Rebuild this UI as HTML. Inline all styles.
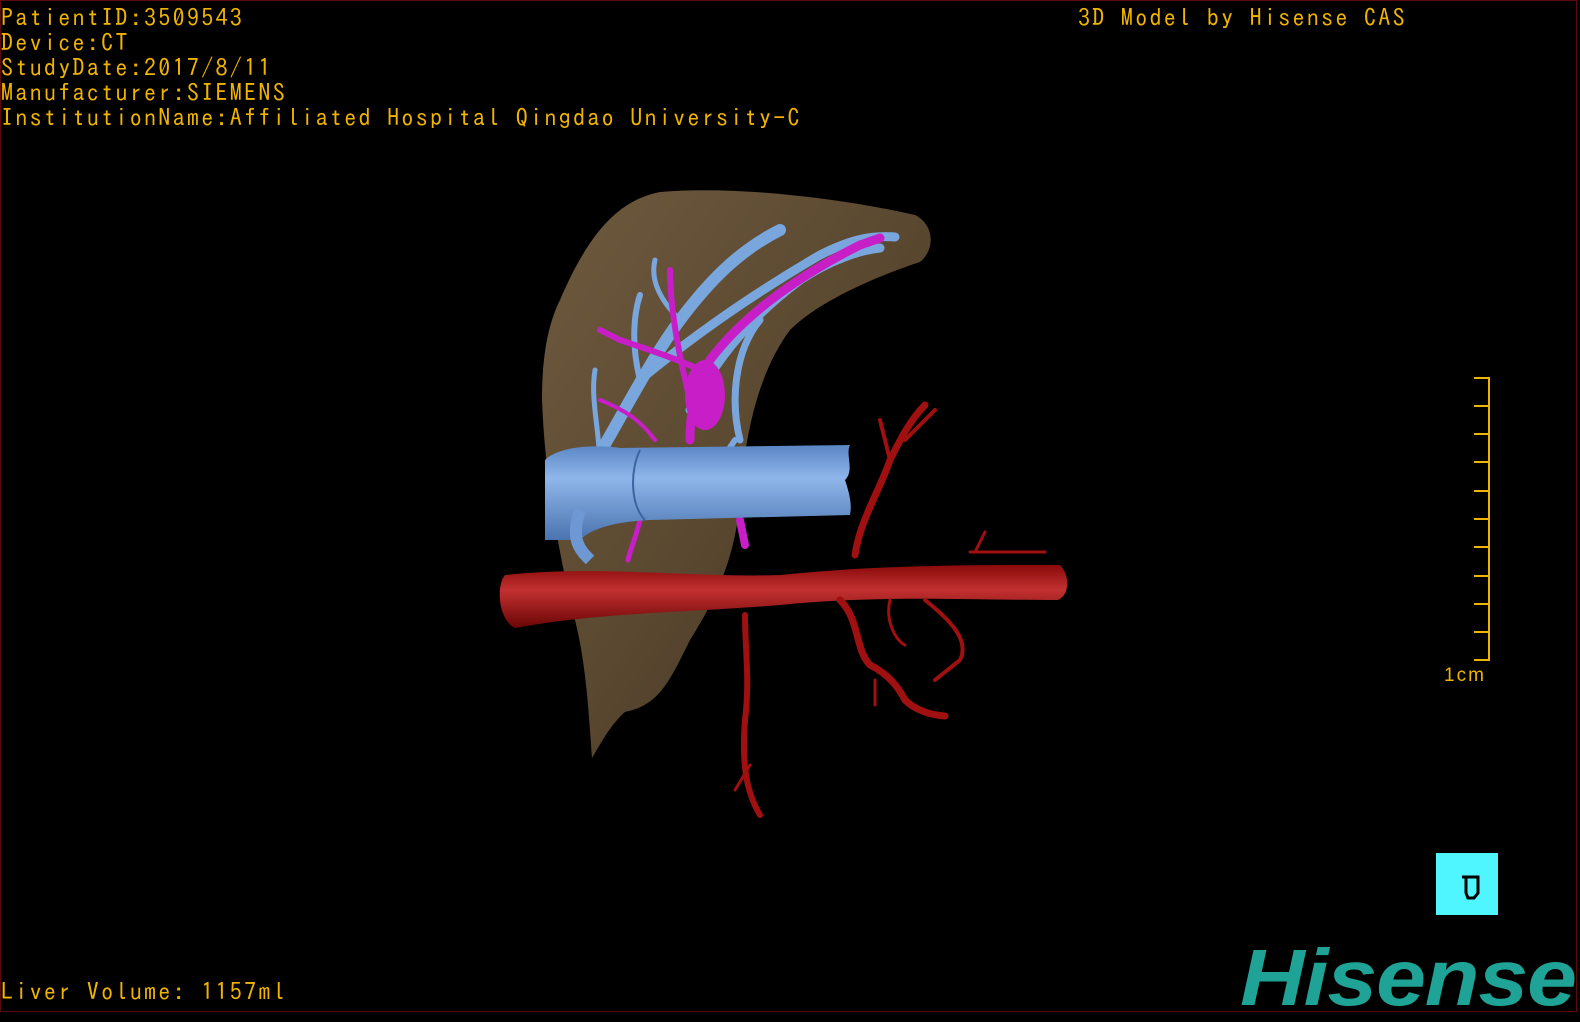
<!DOCTYPE html>
<html><head><meta charset="utf-8"><style>
html,body{margin:0;padding:0;background:#000;}
body{width:1580px;height:1020px;position:relative;overflow:hidden;}
.frame{position:absolute;left:0;top:0;width:1575px;height:1010px;border:1px solid #5a0a0a;box-sizing:content-box;}
.t{position:absolute;color:#f0b400;font-family:"IPAGothic","Liberation Mono",monospace;font-size:24px;letter-spacing:2.3px;line-height:25px;white-space:pre;}
.logo{position:absolute;left:1240px;top:938px;color:#1fa396;font-family:"Liberation Sans",sans-serif;font-weight:bold;font-style:italic;font-size:80px;letter-spacing:-1px;line-height:80px;transform:scaleX(1.12);transform-origin:left top;}
</style></head><body>
<div class="frame"></div>
<div class="t" style="left:1px;top:5px">PatientID:3509543
Device:CT
StudyDate:2017/8/11
Manufacturer:SIEMENS
InstitutionName:Affiliated Hospital Qingdao University-C</div>
<div class="t" style="left:1078px;top:5px">3D Model by Hisense CAS</div>
<div class="t" style="left:1px;top:979px">Liver Volume: 1157ml</div>
<svg width="1580" height="1020" style="position:absolute;left:0;top:0">
<defs>
<linearGradient id="lv" x1="0" y1="0" x2="1" y2="1"><stop offset="0" stop-color="#6e5a3e"/><stop offset="0.5" stop-color="#5a4830"/><stop offset="1" stop-color="#3e3020"/></linearGradient>
<linearGradient id="bl" x1="0" y1="0" x2="0" y2="1"><stop offset="0" stop-color="#5a86c4"/><stop offset="0.35" stop-color="#8fb6ea"/><stop offset="1" stop-color="#4a74b0"/></linearGradient>
<linearGradient id="rd" x1="0" y1="0" x2="0" y2="1"><stop offset="0" stop-color="#8a0a0a"/><stop offset="0.4" stop-color="#c23030"/><stop offset="1" stop-color="#6a0606"/></linearGradient>
</defs>
<path d="M560 300 C590 230 620 200 660 192 C740 185 850 200 915 215 C935 225 935 250 920 262 C880 275 820 300 790 330 C760 370 745 430 740 500 C735 560 715 600 690 640 C670 680 660 705 625 712 C610 725 600 745 592 758 C588 700 585 660 575 620 C560 560 545 480 542 400 C542 350 550 320 560 300Z" fill="url(#lv)"/>
<g fill="none" stroke="#7aa6de" stroke-linecap="round">
<path d="M590 470 C620 420 650 360 680 320 C710 280 740 250 780 230" stroke-width="12"/>
<path d="M640 380 C700 330 760 290 820 255 C850 240 870 235 895 237" stroke-width="9"/>
<path d="M690 410 C720 350 760 310 800 280 C830 260 860 250 880 248" stroke-width="9"/>
<path d="M740 440 C730 400 735 350 760 320" stroke-width="7"/>
<path d="M640 380 C630 340 635 310 640 295" stroke-width="6"/>
<path d="M600 470 C600 430 590 400 595 370" stroke-width="5"/>
<path d="M680 320 C660 300 650 280 655 260" stroke-width="5"/>
<path d="M715 470 L735 440" stroke-width="6"/>
</g>
<g fill="none" stroke="#c81ec8" stroke-linecap="round">
<path d="M690 440 C690 400 700 380 710 360 C740 320 790 280 860 245 L880 238" stroke-width="9"/>
<path d="M690 400 C680 360 670 310 670 270" stroke-width="6"/>
<path d="M700 370 C680 360 650 350 620 340 L600 330" stroke-width="6"/>
<path d="M655 440 C640 420 625 410 600 400" stroke-width="4"/>
<path d="M640 520 C635 540 630 550 628 560" stroke-width="5"/>
<path d="M740 520 L745 545" stroke-width="8"/>
</g>
<ellipse cx="705" cy="395" rx="20" ry="35" fill="#c81ec8"/>
<path d="M545 460 C560 445 600 445 620 448 L850 445 C845 455 855 470 845 480 C850 495 852 505 850 515 L650 520 C610 522 590 530 580 540 L545 540Z" fill="url(#bl)"/>
<path d="M640 450 C630 470 630 505 645 520" stroke="#3e64a0" stroke-width="2" fill="none"/>
<path d="M580 510 C570 540 580 550 590 560" stroke="#6d98d4" stroke-width="12" fill="none"/>
<path d="M505 575 C600 565 700 578 780 575 C880 565 960 565 1060 565 C1070 575 1070 595 1058 600 C960 600 880 595 780 605 C700 612 600 612 515 628 C498 620 496 585 505 575Z" fill="url(#rd)"/>
<g fill="none" stroke="#a01010" stroke-linecap="round">
<path d="M855 555 C860 520 880 490 890 460 C900 440 910 420 925 405" stroke-width="7"/>
<path d="M890 460 L880 420 M905 440 L935 410" stroke-width="4"/>
<path d="M840 600 C860 620 855 650 870 665 C890 675 900 690 905 700 C915 710 930 715 945 716" stroke-width="7"/>
<path d="M745 615 C745 650 750 680 745 720 C742 760 745 790 760 815" stroke-width="6"/>
<path d="M925 600 C950 620 970 640 960 660 L935 680" stroke-width="4"/>
<path d="M890 600 C885 620 895 640 905 645" stroke-width="3"/>
<path d="M970 552 L1045 552 M975 552 L985 532" stroke-width="3"/>
<path d="M875 680 L875 705 M750 765 L735 790" stroke-width="3"/>
</g>
<g stroke="#f0b400" stroke-width="2">
<path d="M1489 378 L1489 660"/>
<path d="M1474 378H1490M1474 406H1490M1474 434H1490M1474 462H1490M1474 491H1490M1474 519H1490M1474 547H1490M1474 576H1490M1474 604H1490M1474 632H1490M1474 660H1490"/>
</g>
<text x="1444" y="681" fill="#f0b400" font-family="Liberation Sans,sans-serif" font-size="19" letter-spacing="2">1cm</text>
<rect x="1436" y="853" width="62" height="62" fill="#4ff6ff"/>
<path d="M1462 877 H1478 V893 L1474 898 H1468 L1466 893 V878" fill="none" stroke="#000" stroke-width="3"/>
</svg>
<div class="logo">Hisense</div>
</body></html>
